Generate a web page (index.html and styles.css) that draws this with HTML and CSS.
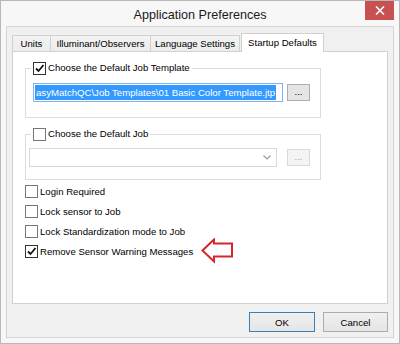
FILE: index.html
```
<!DOCTYPE html>
<html>
<head>
<meta charset="utf-8">
<link rel="stylesheet" href="styles.css">
</head>
<body>
<div class="window">
  <div class="titlebar">
    <span class="title">Application Preferences</span>
    <button class="close" aria-label="Close"><svg width="10" height="9" viewBox="0 0 10 9"><path d="M1 0.5 L9 8.5 M9 0.5 L1 8.5" stroke="#fff" stroke-width="1.6" fill="none"/></svg></button>
  </div>
  <div class="client">
    <div class="tabs">
      <div class="tab t-units">Units</div>
      <div class="tab t-illum">Illuminant/Observers</div>
      <div class="tab t-lang">Language Settings</div>
      <div class="tab active t-start">Startup Defaults</div>
    </div>
    <div class="panel">
      <fieldset class="group g1">
        <legend><span class="lg"><span class="cb checked"><svg width="11" height="11" viewBox="0 0 11 11"><path d="M2 5.5 L4.5 8 L9.5 2" stroke="#111" stroke-width="1.8" fill="none"/></svg></span><span>Choose the Default Job Template</span></span></legend>
        <div class="row">
          <div class="textbox"><span class="sel">asyMatchQC\Job Templates\01 Basic Color Template.jtp</span></div>
          <div class="browse">...</div>
        </div>
      </fieldset>
      <fieldset class="group g2">
        <legend><span class="lg"><span class="cb"></span><span>Choose the Default Job</span></span></legend>
        <div class="row row2">
          <div class="combo"><svg width="8" height="5" viewBox="0 0 8 5"><path d="M0.5 0.5 L4 4 L7.5 0.5" stroke="#9a9a9a" stroke-width="1.2" fill="none"/></svg></div>
          <div class="browse disabled">...</div>
        </div>
      </fieldset>
      <ul class="opts">
        <li class="opt"><span class="cb"></span><span>Login Required</span></li>
        <li class="opt"><span class="cb"></span><span>Lock sensor to Job</span></li>
        <li class="opt"><span class="cb"></span><span>Lock Standardization mode to Job</span></li>
        <li class="opt"><span class="cb checked"><svg width="11" height="11" viewBox="0 0 11 11"><path d="M2 5.5 L4.5 8 L9.5 2" stroke="#111" stroke-width="1.8" fill="none"/></svg></span><span>Remove Sensor Warning Messages</span><svg class="arrow" width="33" height="26" viewBox="0 0 33 26"><path d="M1.5 12.5 L13 1.5 L13 5.5 L31 5.5 L31 18.5 L13 18.5 L13 23.5 Z" fill="#fff" stroke="#d6262c" stroke-width="2" stroke-linejoin="miter"/></svg></li>
      </ul>
    </div>
    <div class="footer">
      <button class="btn default">OK</button>
      <button class="btn cancel">Cancel</button>
    </div>
  </div>
</div>
</body>
</html>
```
FILE: styles.css
```
html, body {
  margin: 0;
  padding: 0;
  background: #fff;
}
body {
  font-family: "Liberation Sans", Arial, sans-serif;
  font-size: 9.6px;
  color: #000;
}
.window {
  width: 400px;
  height: 344px;
  box-sizing: border-box;
  border: 1px solid #b8b8b8;
  background: #f7f7f7;
  padding: 0 5px 5px;
  display: flex;
  flex-direction: column;
}
.titlebar {
  height: 25px;
  flex: none;
  display: grid;
  grid-template-columns: 1fr auto 1fr;
  align-items: center;
}
.title {
  grid-column: 2;
  font-size: 12.6px;
  color: #1a1a1a;
  padding-top: 2px;
}
.close {
  grid-column: 3;
  justify-self: end;
  align-self: start;
  width: 29px;
  height: 19px;
  border: 0;
  padding: 0;
  background: #c75050;
  display: flex;
  align-items: center;
  justify-content: center;
}
.client {
  flex: 1;
  border: 1px solid #d5d5d5;
  background: #f0f0f0;
  padding: 6px 5px 0;
  display: flex;
  flex-direction: column;
}
.tabs {
  display: flex;
  align-items: flex-end;
  height: 18px;
  flex: none;
}
.tab {
  box-sizing: border-box;
  height: 16px;
  border: 1px solid #d0d0d0;
  border-bottom: 0;
  background: linear-gradient(#f3f3f3, #ececec);
  text-align: center;
  line-height: 15px;
  white-space: nowrap;
}
.tab + .tab { margin-left: -1px; }
.t-units { width: 39px; }
.t-illum { width: 101px; }
.t-lang { width: 90px; }
.tab.active {
  width: 83px;
  height: 19px;
  margin-left: 1px;
  margin-bottom: -1px;
  background: #fff;
  position: relative;
  z-index: 1;
  line-height: 17px;
}
.panel {
  flex: none;
  height: 253px;
  box-sizing: border-box;
  border: 1px solid #d0d0d0;
  background: #fff;
  padding: 9px 12px 0;
}
.group {
  margin: 0;
  width: 296px;
  min-width: 0;
  box-sizing: border-box;
  border: 1px solid #dcdcdc;
  padding: 8px 0 15px 7px;
}
.group legend {
  padding: 0 2px;
  margin-left: -2px;
  line-height: 14px;
}
.lg {
  display: flex;
  align-items: center;
  gap: 2px;
}
.g2 {
  margin-top: 9px;
  padding: 7px 0 12px 7px;
}
.cb {
  width: 13px;
  height: 13px;
  box-sizing: border-box;
  border: 1px solid #777;
  background: #fff;
  display: inline-flex;
  align-items: center;
  justify-content: center;
  flex: none;
}
.cb.checked { border-color: #333; }
.row {
  display: flex;
  align-items: center;
  gap: 4px;
}
.row2 {
  margin-left: -4px;
  gap: 10px;
}
.textbox {
  width: 250px;
  height: 19px;
  box-sizing: border-box;
  border: 1px solid #7eb4ea;
  padding: 1px;
  overflow: hidden;
  white-space: nowrap;
}
.sel {
  display: inline-block;
  background: #3399ff;
  color: #fff;
  line-height: 15px;
  padding: 0 1px;
}
.browse {
  width: 23px;
  height: 17px;
  box-sizing: border-box;
  border: 1px solid #adadad;
  background: #e5e5e5;
  text-align: center;
  line-height: 13px;
  color: #000;
}
.browse.disabled {
  border-color: #d9d9d9;
  background: #f4f4f4;
  color: #a0a0a0;
}
.combo {
  width: 248px;
  height: 19px;
  box-sizing: border-box;
  border: 1px solid #d9d9d9;
  background: #fff;
  display: flex;
  align-items: center;
  justify-content: flex-end;
  padding-right: 5px;
}
.opts {
  list-style: none;
  margin: 1px 0 0;
  padding: 0;
}
.opt {
  display: flex;
  align-items: center;
  gap: 2px;
  height: 20px;
}
.arrow {
  margin-left: 6px;
  flex: none;
}
.footer {
  display: flex;
  justify-content: flex-end;
  gap: 8px;
  margin-top: 8px;
}
.btn {
  width: 66px;
  height: 20px;
  box-sizing: border-box;
  border: 1px solid #acacac;
  background: linear-gradient(#f0f0f0, #e5e5e5);
  font: inherit;
  color: #000;
  padding: 0;
}
.btn.default { border-color: #3c7fb1; }
.btn.cancel { width: 65px; }
```
